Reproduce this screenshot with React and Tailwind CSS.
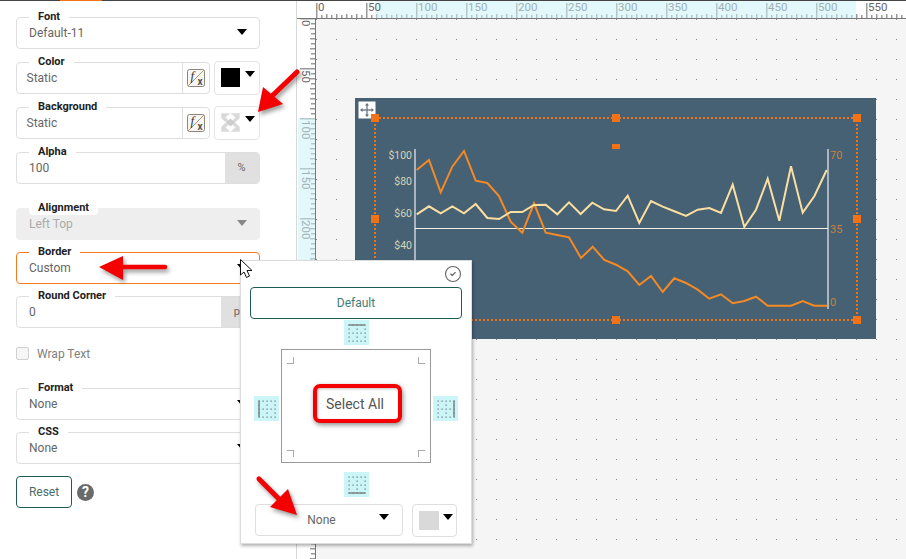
import React from "react";
import { CircleCheck } from "lucide-react";

const ORANGE_LINE = "416.7,170 429,160 440.7,192.3 452.3,166.7 464,151 475.7,180.7 487.3,183 499,196 510.7,221.7 522.3,232.7 534,203.3 545.7,232.7 557.3,235 569,237.3 581,258 592.7,246.7 604.3,260 616,264.7 627.7,271.3 639.3,285 651,276 662.7,292 674.3,278.3 686,283 697.7,289.7 709.3,298.7 721,294.3 732.7,303.3 744.3,301 756,296.7 767.7,305.7 779.3,305.7 791,305.7 802.7,301 814.3,305.7 827,305.7";
const CREAM_LINE = "416.7,214.3 429,206.3 440.7,213.3 452.3,206.3 464,213.3 475.7,204 487.3,218 499,219 510.7,212 522.3,212 534,205 545.7,204.7 557.3,214.3 569,202.3 580.7,214 592.3,202.7 604,209.3 616,211 627.7,195.7 639.3,223 651,201 662.7,206.7 674.3,211.3 686,216 697.7,209.7 709.3,208 721,213 732.7,184.7 744.3,227 756,209.7 767.7,178.7 779.3,220.7 791,166.3 802.7,212.7 814.3,196.3 826.7,170";
const HANDLES = [
  [371, 114], [612, 114], [853, 114],
  [371, 215], [853, 215],
  [371, 316], [612, 316], [853, 316],
];

function Arrow({ className = "", color = "#000" }) {
  return (
    <svg width="10" height="6" viewBox="0 0 10 6" className={className}>
      <polygon points="0,0 10,0 5,6" fill={color} />
    </svg>
  );
}

function Field({ label, className = "", children, disabled, active }) {
  const tone = disabled
    ? "border-[#eeeeee] bg-[#eeeeee]"
    : active
      ? "border-[#f47b20] bg-white"
      : "border-[#dedede] bg-white";
  return (
    <div className={`relative h-8 rounded-[4px] border-[1.5px] ${tone} ${className}`}>
      <span className="absolute left-[12px] top-[-8px] z-10 rounded-b-[4px] bg-white px-[9px] text-[11px] font-bold leading-[14px] text-[#222]">
        {label}
      </span>
      {children}
    </div>
  );
}

function SelectField({ label, value, disabled, active, className }) {
  return (
    <Field label={label} disabled={disabled} active={active} className={className}>
      <div className="flex h-full items-center justify-between pl-[12px] pr-[12px]">
        <span className={`text-[12px] ${disabled ? "text-[#aaa]" : "text-[#666]"}`}>{value}</span>
        <Arrow className="mb-[2px]" color={disabled ? "#888" : "#000"} />
      </div>
    </Field>
  );
}

function FxIcon() {
  return (
    <svg width="18" height="18" viewBox="0 0 18 18">
      <rect x="0.5" y="0.5" width="17" height="17" rx="2" fill="#f6f6f6" stroke="#8f8478" />
      <line x1="1" y1="17" x2="17" y2="1" stroke="#b8925f" />
      <text x="3.5" y="10.5" fontSize="13" fontStyle="italic" fontFamily="Liberation Serif" fill="#333">f</text>
      <text x="10.5" y="16" fontSize="10" fontWeight="700" fontFamily="Roboto" fill="#555">x</text>
    </svg>
  );
}

function ColorField({ label, swatch }) {
  return (
    <div className="flex h-8 items-center gap-[4px]">
      <Field label={label} className="flex w-[194.5px] items-stretch">
        <div className="flex flex-1 items-center pl-[9.5px] text-[12px] text-[#666]">Static</div>
        <div className="flex w-[27px] items-center justify-center border-l border-[#dedede]">
          <FxIcon />
        </div>
      </Field>
      <div className="flex h-[34px] w-[46px] shrink-0 items-center gap-[5px] rounded-[4px] border-[1.5px] border-[#e4e4e4] pb-[1px] pl-[6.5px]">
        {swatch}
        <Arrow className="mb-[7px]" />
      </div>
    </div>
  );
}

function UnitField({ label, value, unit, unitWidth }) {
  return (
    <Field label={label} className="flex items-stretch">
      <div className="flex flex-1 items-center pl-[12px] text-[12px] text-[#666]">{value}</div>
      <div className={`flex items-center justify-center rounded-r-[3px] bg-[#e0e0e0] text-[11px] text-[#666] ${unitWidth}`}>
        {unit}
      </div>
    </Field>
  );
}

function TransparentSwatch() {
  return (
    <svg width="19" height="19" viewBox="0 0 19 19">
      <rect x="0.5" y="0.5" width="18" height="18" fill="#d9d9d9" stroke="#e4e4e4" />
      <polygon points="9.5,0 14.5,4.5 9.5,9 4.5,4.5" fill="#fff" />
      <polygon points="9.5,10 14.5,14.5 9.5,19 4.5,14.5" fill="#fff" />
      <polygon points="0,5 5,9.5 0,14" fill="#fff" />
      <polygon points="19,5 14,9.5 19,14" fill="#fff" />
      <polygon points="9.5,5.5 13.5,9.5 9.5,13.5 5.5,9.5" fill="#cccccc" />
    </svg>
  );
}

function LeftPanel() {
  return (
    <div className="flex w-[297px] shrink-0 flex-col border-r border-[#d8d8d8] pl-4 pr-[36.5px] pt-[16px]">
      <SelectField label="Font" value="Default-11" />
      <div className="mt-[13px]">
        <ColorField label="Color" swatch={<div className="h-[19px] w-[19px] bg-black" />} />
      </div>
      <div className="mt-[13px]">
        <ColorField label="Background" swatch={<TransparentSwatch />} />
      </div>
      <div className="mt-[13px]">
        <UnitField label="Alpha" value="100" unit="%" unitWidth="w-[34px]" />
      </div>
      <SelectField label="Alignment" value="Left Top" disabled className="mt-[24px]" />
      <SelectField label="Border" value="Custom" active className="mt-[12px]" />
      <div className="mt-[12px]">
        <UnitField label="Round Corner" value="0" unit="px" unitWidth="w-[38px]" />
      </div>
      <div className="mt-[19px] flex h-[13px] items-center gap-[8px]">
        <div className="h-[13px] w-[13px] rounded-[2px] border border-[#d0d0d0] bg-[#f6f6f6]" />
        <span className="text-[12px] text-[#808080]">Wrap Text</span>
      </div>
      <SelectField label="Format" value="None" className="mt-[28px]" />
      <SelectField label="CSS" value="None" className="mt-[12px]" />
      <div className="mt-[12px] flex items-center gap-[5px]">
        <button className="h-8 w-[56px] rounded-[4px] border border-[#1d5c55] text-[12px] text-[#4d6b68]">
          Reset
        </button>
        <div className="flex h-[17px] w-[17px] items-center justify-center rounded-full bg-[#6a6a6a] text-[14px] font-bold leading-none text-white">
          ?
        </div>
      </div>
    </div>
  );
}

function TopRuler() {
  const ticks = [];
  for (let v = 0; v <= 590; v += 5) {
    if (v % 50 === 0) continue;
    const h = v % 10 === 0 ? 4 : 3;
    ticks.push(<rect key={v} x={v} y={18 - h} width="1.5" height={h} fill={v + 316 >= 375 && v + 316 < 856 ? "#b4c8cc" : "#9a9a9a"} />);
  }
  const labels = [];
  for (let v = 0; v <= 550; v += 50) {
    const inSel = v + 316 >= 375 && v + 316 < 856;
    labels.push(
      <g key={v}>
        <rect x={v} y="3" width="1.5" height="15" fill={inSel ? "#b4c8cc" : "#9a9a9a"} />
        <text x={v + 2} y="11" fontSize="11.5" fontFamily="Roboto" fill={inSel ? "#9fb0b4" : "#666"}>{v}</text>
      </g>
    );
  }
  return (
    <div className="flex h-[18px] shrink-0 border-b border-[#777]">
      <div className="w-[19px] shrink-0" />
      <svg width="590" height="17" viewBox="0 1 590 17" className="shrink-0 bg-white">
        <rect x="59" y="1" width="481" height="17" fill="#e2f8fb" />
        {ticks}
        {labels}
      </svg>
    </div>
  );
}

function LeftRuler() {
  const items = [];
  for (let v = 0; v <= 540; v += 5) {
    const y = v - 1;
    const inSel = y + 19 >= 118 && y + 19 < 320;
    const color = inSel ? "#b4c8cc" : "#9a9a9a";
    if (v % 50 === 0) {
      items.push(
        <g key={v}>
          <rect x="3" y={y} width="15" height="1.5" fill={color} />
          <text x="0" y="0" transform={`translate(5,${y + 2}) rotate(90)`} fontSize="11.5" fontFamily="Roboto" fill={inSel ? "#9fb0b4" : "#666"}>{v}</text>
        </g>
      );
    } else {
      const w = v % 10 === 0 ? 5 : 4;
      items.push(<rect key={v} x={18 - w} y={y} width={w} height="1.5" fill={color} />);
    }
  }
  return (
    <div className="w-[19px] shrink-0 border-r border-[#777] bg-white">
      <svg width="18" height="540" viewBox="0 0 18 540">
        <rect x="1" y="99" width="17" height="202" fill="#e2f8fb" />
        {items}
      </svg>
    </div>
  );
}

function Chart() {
  return (
    <svg
      width="521"
      height="241"
      viewBox="355 98 521 241"
      className="absolute left-[39px] top-[79px] bg-[#466074]"
    >
      <rect x="358.5" y="101.5" width="17" height="17" fill="#fff" />
      <g fill="#6d6d6d" stroke="#6d6d6d">
        <line x1="362" y1="110" x2="372" y2="110" strokeWidth="1.3" />
        <line x1="367" y1="105" x2="367" y2="115" strokeWidth="1.3" stroke="#5b7a95" />
        <polygon points="367,103 365,105.5 369,105.5" stroke="none" />
        <polygon points="367,117 365,114.5 369,114.5" stroke="none" />
        <polygon points="360,110 362.5,108 362.5,112" stroke="none" />
        <polygon points="374,110 371.5,108 371.5,112" stroke="none" />
      </g>
      <rect x="375" y="118" width="482" height="202" fill="none" stroke="#f47216" strokeWidth="2" strokeDasharray="2 2" />
      <line x1="415" y1="149" x2="415" y2="320" stroke="#a9b5c0" strokeWidth="2" />
      <line x1="828" y1="149" x2="828" y2="309" stroke="#a9b5c0" strokeWidth="2" />
      <line x1="415" y1="228.5" x2="828" y2="228.5" stroke="#f4f1e6" strokeWidth="1.2" />
      <polyline points={ORANGE_LINE} fill="none" stroke="#f58a24" strokeWidth="2" strokeLinejoin="miter" />
      <polyline points={CREAM_LINE} fill="none" stroke="#fbdfa0" strokeWidth="2" strokeLinejoin="miter" />
      {HANDLES.map(([x, y]) => (
        <rect key={`${x}-${y}`} x={x} y={y} width="8" height="8" fill="#f47216" />
      ))}
      <rect x="612" y="144" width="8" height="5" fill="#f47216" />
      <g fontFamily="Roboto" fontSize="10.5" fill="#d8d4b4" textAnchor="end">
        <text x="412" y="159">$100</text>
        <text x="412" y="185">$80</text>
        <text x="412" y="217">$60</text>
        <text x="412" y="249">$40</text>
      </g>
      <g fontFamily="Roboto" fontSize="11" fill="#c9823c">
        <text x="830" y="159">70</text>
        <text x="830" y="233">35</text>
        <text x="830" y="306">0</text>
      </g>
    </svg>
  );
}

function BorderIcon({ side }) {
  const dots = [];
  for (let r = 0; r <= 8; r++) {
    for (let c = 0; c <= 8; c++) {
      if ((r % 4 === 0 || c % 4 === 0) && (r + c) % 2 === 0) {
        dots.push(<rect key={`${r}-${c}`} x={4.5 + c * 2} y={4.5 + r * 2} width="1.2" height="1.2" fill="#5f7378" />);
      }
    }
  }
  const lines = {
    top: [4.5, 5, 21, 5],
    bottom: [4.5, 21, 21, 21],
    left: [5, 4.5, 5, 21],
    right: [21, 4.5, 21, 21],
  };
  const [x1, y1, x2, y2] = lines[side];
  return (
    <svg width="25" height="25" viewBox="0 0 25 25" className="shrink-0 bg-[#ccf5f7]">
      {dots}
      <line x1={x1} y1={y1} x2={x2} y2={y2} stroke="#7c8487" strokeWidth="1.5" />
    </svg>
  );
}

function BorderPopup() {
  return (
    <div className="absolute left-[240px] top-[260px] z-20 flex h-[284px] w-[232px] flex-col border border-[#dcdcdc] bg-white px-[9px] shadow-[1px_2px_3px_rgba(0,0,0,0.3)]">
      <div className="flex h-[26px] items-center justify-end">
        <CircleCheck size={18} strokeWidth={1.5} color="#666" />
      </div>
      <button className="h-8 w-[212px] shrink-0 rounded-[4px] border border-[#1d5c55] pb-[1px] text-[12px] text-[#3f7c76]">
        Default
      </button>
      <div className="mt-[1px] flex w-[212px] justify-center">
        <BorderIcon side="top" />
      </div>
      <div className="ml-[4px] mt-[4px] flex items-center gap-[2px]">
        <div className="mt-[4px]"><BorderIcon side="left" /></div>
        <div className="relative flex h-[114px] w-[150px] items-center justify-center border border-[#999]">
          <span className="absolute left-[5px] top-[7px] h-[7px] w-[7px] border-b border-r border-[#aaa]" />
          <span className="absolute right-[5px] top-[7px] h-[7px] w-[7px] border-b border-l border-[#aaa]" />
          <span className="absolute bottom-[5px] left-[5px] h-[7px] w-[7px] border-r border-t border-[#aaa]" />
          <span className="absolute bottom-[5px] right-[5px] h-[7px] w-[7px] border-l border-t border-[#aaa]" />
          <button className="mb-[5px] ml-[3px] h-[39px] w-[89px] rounded-[7px] border-[4px] border-[#f40000] bg-white pr-[5px] pt-[1px] text-[14px] text-[#555] shadow-[1px_2px_5px_rgba(0,0,0,0.45),inset_1px_1px_3px_rgba(0,0,0,0.25)]">
            Select All
          </button>
        </div>
        <div className="mt-[4px]"><BorderIcon side="right" /></div>
      </div>
      <div className="mt-[9px] flex w-[212px] justify-center">
        <BorderIcon side="bottom" />
      </div>
      <div className="ml-[5px] mt-[7px] flex gap-[9px]">
        <div className="relative flex h-8 w-[148px] items-center justify-center rounded-[4px] border border-[#dedede] pr-[15px] text-[12px] text-[#666]">
          None
          <Arrow className="absolute right-[13px] top-[9px]" />
        </div>
        <div className="flex h-[33px] w-[45px] items-center gap-[4px] rounded-[4px] border border-[#dedede] pl-[6px]">
          <div className="h-[19px] w-[20px] bg-[#d9d9d9]" />
          <Arrow className="mb-[7px]" />
        </div>
      </div>
    </div>
  );
}

function Overlay() {
  return (
    <svg
      width="906"
      height="559"
      viewBox="0 0 906 559"
      className="pointer-events-none absolute left-0 top-0 z-30"
    >
      <g className="drop-shadow-[2px_3px_2px_rgba(0,0,0,0.4)]" fill="#f40000" stroke="#f40000" strokeLinecap="round">
        <line x1="297" y1="72" x2="272" y2="96" strokeWidth="5" />
        <polygon points="258,112 263,87 283,104" stroke="none" />
        <line x1="165" y1="267" x2="120" y2="267" strokeWidth="4.5" />
        <polygon points="99,267 123,256 123,280" stroke="none" />
        <line x1="259" y1="479" x2="282" y2="502" strokeWidth="5" />
        <polygon points="297,515 288,489 270,507" stroke="none" />
      </g>
      <polygon points="240.5,259.5 240.5,275 244,272 246.5,277.5 249.5,276 247,270.5 252,270.5" fill="#fff" stroke="#111" strokeWidth="1" />
    </svg>
  );
}

export default function App() {
  return (
    <div className="relative flex h-[559px] w-[906px] flex-col overflow-hidden bg-white font-['Roboto',sans-serif]">
      <div className="flex h-px shrink-0 bg-[#444]">
        <div className="ml-[60px] h-px w-[42px] bg-[#f47216]" />
      </div>
      <div className="flex min-h-0 flex-1">
        <LeftPanel />
        <div className="flex min-w-0 flex-1 flex-col">
          <TopRuler />
          <div className="flex min-h-0 flex-1">
            <LeftRuler />
            <div className="relative flex-1 bg-[#f5f5f5] bg-[radial-gradient(circle_at_0.5px_0.5px,#8a8a8a_0.6px,transparent_0.8px)] bg-[size:20px_20px]">
              <Chart />
            </div>
          </div>
        </div>
      </div>
      <BorderPopup />
      <Overlay />
    </div>
  );
}
